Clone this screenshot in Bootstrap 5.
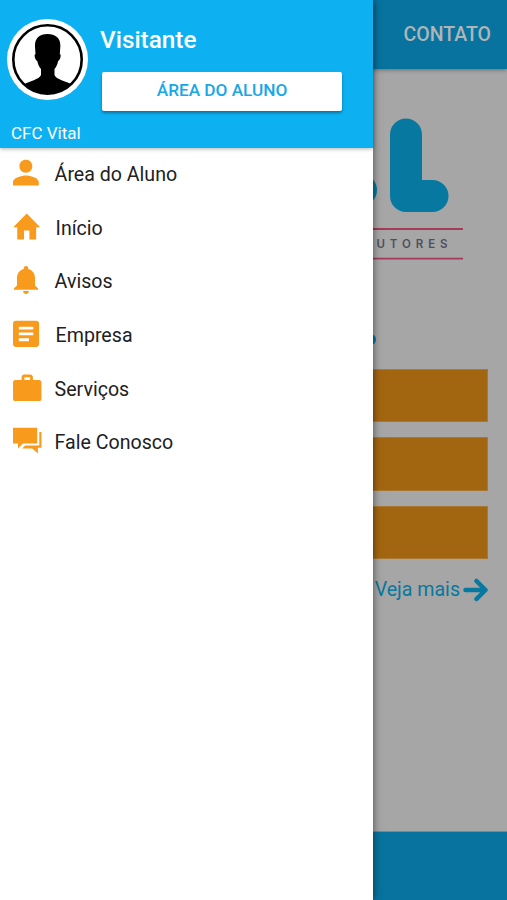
<!DOCTYPE html>
<html lang="pt-BR">
<head>
<meta charset="utf-8">
<meta name="viewport" content="width=device-width, initial-scale=1">
<title>CFC Vital</title>
<link href="https://cdn.jsdelivr.net/npm/bootstrap@5.3.0/dist/css/bootstrap.min.css" rel="stylesheet">
<style>
html,body{height:100%;overflow:hidden}
body{font-family:Roboto,"Liberation Sans",sans-serif;background:#a6a6a6;color:#212121}
.app-page{height:900px}
.app-top{height:69px;background:#07739e;color:#b0b5b8;box-shadow:0 1px 4px rgba(0,0,0,.35);font-size:19.5px;font-weight:500;padding-right:16px}
.brand-area{height:299.5px}
.brand-area svg{display:block}
.brand-area text{font-family:Inter,"Liberation Sans",sans-serif}
.options{padding:0 19.5px 0 20px;gap:15px}
.option-box{height:53.5px;background:#a36610;border:1px solid #a97832}
.more-link{color:#07789f;font-size:19.6px;padding-right:19px;margin-top:16px;line-height:30px;gap:3px}
.app-foot{height:69px;background:#07739e;border-top:1px solid #5b93a9}
.drawer{position:absolute;left:0;top:0;width:372.5px;height:900px;background:#fff;box-shadow:0 0 8px rgba(0,0,0,.55)}
.drawer-head{height:148px;background:#0db1f2;color:#fff;box-shadow:0 1px 4px rgba(0,0,0,.3);padding:19px 30.5px 0 7px}
.avatar{width:81px;height:81px;flex:none}
.who{font-size:24.3px;font-weight:500;line-height:30px;padding-top:6px}
.btn-area{height:39px;border-radius:2px;background:#fff;color:#19a7e6;font-size:17.2px;font-weight:500;line-height:36px;padding:0 0 3px;border:0;box-shadow:0 2px 3px rgba(0,0,0,.35);margin:17px 0 0 2px;width:240px}
.btn-area:hover{background:#f5f5f5;color:#19a7e6}
.school{font-size:17px;line-height:22px;padding-left:4px;margin-top:11px}
.menu-line{height:53.7px;font-size:19.6px;padding-left:10px;line-height:24px;color:#212121}
.menu-line svg{width:32px;height:32px;flex:none;fill:#f89a1c;margin-right:12.6px}
.menu-line.inset svg{margin-right:13.6px}
</style>
<script src="https://cdn.jsdelivr.net/npm/bootstrap@5.3.0/dist/js/bootstrap.bundle.min.js"></script>
</head>
<body>
<main class="app-page d-flex flex-column">
  <header class="app-top d-flex align-items-center justify-content-end flex-shrink-0">CONTATO</header>
  <section class="brand-area flex-shrink-0">
    <svg width="507" height="299" viewBox="0 69 507 299">
      <g fill="#07789f">
        <path d="M390 134.500a16 16 0 0 1 32 0V180h10.500a16 16 0 0 1 0 32H406a16 16 0 0 1-16-16z"/>
        <circle cx="361" cy="190" r="16"/>
        <circle cx="370.500" cy="339.500" r="5.500"/>
      </g>
      <path d="M300 229H463M300 258.700H463" stroke="#a33b59" stroke-width="1.800"/>
      <text x="376.500" y="247.500" font-size="11.500" font-weight="600" fill="#4e505c" textLength="71">UTORES</text>
    </svg>
  </section>
  <section class="options d-flex flex-column flex-shrink-0">
    <div class="option-box"></div>
    <div class="option-box"></div>
    <div class="option-box"></div>
  </section>
  <div class="more-link d-flex align-items-center justify-content-end">
    <span>Veja mais</span>
    <svg width="25" height="26" viewBox="0 0 25 26" fill="none" stroke="#07789f" stroke-width="4.500" stroke-linecap="round" stroke-linejoin="round"><path d="M2.500 13H22M13.500 4 22.500 13 13.500 22"/></svg>
  </div>
  <footer class="app-foot mt-auto flex-shrink-0"></footer>
</main>

<aside class="drawer">
  <div class="drawer-head">
    <div class="d-flex">
      <svg class="avatar" viewBox="0 0 81 81">
        <defs><clipPath id="face"><circle cx="40.500" cy="40.500" r="34.500"/></clipPath></defs>
        <circle cx="40.500" cy="40.500" r="40.500" fill="#fff"/>
        <circle cx="40.500" cy="40.500" r="34.200" fill="#fff" stroke="#000" stroke-width="2.600"/>
        <path clip-path="url(#face)" d="M40.500 15C32 15 27.500 19.500 28 28l.5 7c-1.700 0-.8 6 1.800 7 .6 3.500 2 6 3.700 8v6c-1.500 4.500-12 6-17 9.500L24 78h33l8-12.500C59 62 49 60.500 47.500 56v-6c1.700-2 3-4.500 3.600-8 2.400-1 3.400-7 1.700-7l.5-7C54 19.500 49 15 40.500 15z"/>
      </svg>
      <div class="flex-grow-1 ms-2 ps-1">
        <div class="who">Visitante</div>
        <button type="button" class="btn btn-area text-uppercase d-block">Área do Aluno</button>
      </div>
    </div>
    <div class="school">CFC Vital</div>
  </div>
  <nav class="d-flex flex-column">
    <a href="#" class="menu-line d-flex align-items-center text-decoration-none"><svg viewBox="0 0 32 32"><path transform="translate(.4 -1.800) scale(1.290)" d="M12 12c2.700 0 5-2.100 5-5s-2.200-5-5-5-5 2.100-5 5 2.300 5 5 5zm0 2.200c-3.300 0-10 1.700-10 5V22h20v-2.800c0-3.300-6.700-5-10-5z"/></svg>Área do Aluno</a>
    <a href="#" class="menu-line inset d-flex align-items-center text-decoration-none"><svg viewBox="0 0 32 32"><path transform="translate(.5 -4) scale(1.350 1.530)" d="M10 20v-6h4v6h5v-8h3L12 3 2 12h3v8z"/></svg>Início</a>
    <a href="#" class="menu-line d-flex align-items-center text-decoration-none"><svg viewBox="0 0 32 32"><path transform="translate(-2 -3.600) scale(1.500 1.436)" d="M12 22c1.100 0 2-.9 2-2h-4c0 1.100.9 2 2 2zm6-6v-5c0-3.070-1.640-5.640-4.500-6.320V4c0-.83-.67-1.500-1.500-1.500s-1.500.67-1.500 1.500v.68C7.630 5.360 6 7.920 6 11v5l-2 2v1h16v-1l-2-2z"/></svg>Avisos</a>
    <a href="#" class="menu-line inset d-flex align-items-center text-decoration-none"><svg viewBox="0 0 32 32"><path transform="translate(-1.350 -3.500) scale(1.450)" d="M19 3H5c-1.100 0-2 .9-2 2v14c0 1.100.9 2 2 2h14c1.100 0 2-.9 2-2V5c0-1.100-.9-2-2-2zm-5 14H7v-2h7v2zm3-4H7v-2h10v2zm0-4H7V7h10v2z"/></svg>Empresa</a>
    <a href="#" class="menu-line d-flex align-items-center text-decoration-none"><svg viewBox="0 0 32 32"><path transform="translate(.2 -2.400) scale(1.420 1.400)" d="M20.500 6h-4.500V4c0-1.100-.9-2-2-2h-4c-1.100 0-2 .9-2 2v2H3.500C2.700 6 2 6.700 2 7.500V19.500c0 .8.700 1.500 1.500 1.500h17c.8 0 1.500-.7 1.500-1.500V7.500c0-.8-.7-1.500-1.500-1.500zM14 6h-4V4h4v2z"/></svg>Serviços</a>
    <a href="#" class="menu-line d-flex align-items-center text-decoration-none"><svg viewBox="0 0 32 32"><path transform="translate(.2 -3.600) scale(1.420 1.430)" d="M2 3H19V14H9L5.500 17.500V14H2zM20.500 6H22V17H19.500V21L15.500 17.500H8.500L10.500 15.500H20.500z"/></svg>Fale Conosco</a>
  </nav>
</aside>
</body>
</html>
